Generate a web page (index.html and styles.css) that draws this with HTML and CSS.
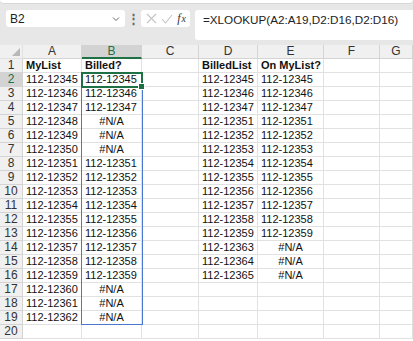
FILE: index.html
```html
<!DOCTYPE html>
<html>
<head>
<meta charset="utf-8">
<title>XLOOKUP</title>
<link rel="stylesheet" href="styles.css">
</head>
<body>
<div class="bar">
	<div class="ribbon-edge"></div>
	<div class="fx-row">
		<div class="namebox"><span>B2</span><svg width="8" height="6" viewBox="0 0 8 6"><path d="M1 1.5 L4 4.5 L7 1.5" fill="none" stroke="#666" stroke-width="1"/></svg></div>
		<div class="dots">⋮</div>
		<div class="fx-btns">
			<svg width="11" height="11" viewBox="0 0 11 11"><path d="M1 1 L10 10 M10 1 L1 10" stroke="#c4c4c4" stroke-width="1.1"/></svg>
			<svg width="12" height="10" viewBox="0 0 12 10"><path d="M1 5 L4.5 9 L11 1" fill="none" stroke="#c4c4c4" stroke-width="1.1"/></svg>
			<span class="fx"><i>f</i><i class="x">x</i></span>
		</div>
		<div class="formula">=XLOOKUP(A2:A19,D2:D16,D2:D16)</div>
	</div>
</div>
<div class="sheet">
	<div class="grid" id="grid"></div>
	<div class="spill"></div>
	<div class="active"><span class="handle"></span></div>
</div>
<script>
var cols = ['A','B','C','D','E','F','G']
var rows = [
	['MyList','Billed?','','BilledList','On MyList?'],
	['112-12345','112-12345','','112-12345','112-12345'],
	['112-12346','112-12346','','112-12346','112-12346'],
	['112-12347','112-12347','','112-12347','112-12347'],
	['112-12348','#N/A','','112-12351','112-12351'],
	['112-12349','#N/A','','112-12352','112-12352'],
	['112-12350','#N/A','','112-12353','112-12353'],
	['112-12351','112-12351','','112-12354','112-12354'],
	['112-12352','112-12352','','112-12355','112-12355'],
	['112-12353','112-12353','','112-12356','112-12356'],
	['112-12354','112-12354','','112-12357','112-12357'],
	['112-12355','112-12355','','112-12358','112-12358'],
	['112-12356','112-12356','','112-12359','112-12359'],
	['112-12357','112-12357','','112-12363','#N/A'],
	['112-12358','112-12358','','112-12364','#N/A'],
	['112-12359','112-12359','','112-12365','#N/A'],
	['112-12360','#N/A','','',''],
	['112-12361','#N/A','','',''],
	['112-12362','#N/A','','',''],
	['','','','','']
]

function cell(text, cls) {
	var d = document.createElement('div')
	d.className = cls
	d.textContent = text
	return d
}

function main() {
	var grid = document.getElementById('grid')
	grid.appendChild(cell('', 'corner'))
	cols.forEach(function(c) { grid.appendChild(cell(c, c=='B' ? 'colhead sel' : 'colhead')) })
	rows.forEach(function(r, i) {
		grid.appendChild(cell(i+1, i==1 ? 'rowhead sel' : 'rowhead'))
		for(var j=0; j<cols.length; j++) {
			var t = r[j] || ''
			var cls = 'c'
			if(i==0) cls += ' bold'
			if(t=='#N/A') cls += ' err'
			grid.appendChild(cell(t, cls))
		}
	})
}

main()
</script>
</body>
</html>
```

FILE: styles.css
```css
html, body { margin: 0; padding: 0; background: #fff; overflow: hidden; }
body { font: normal 11px 'Liberation Sans', Arial, sans-serif; color: #111; width: 413px; height: 341px; }

.bar { height: 45px; background: #e7e7e7; position: relative; }
.ribbon-edge { height: 3px; background: #fff; border-bottom: 1px solid #d6d6d6; border-radius: 0 0 4px 4px; }
.fx-row { display: flex; align-items: flex-start; padding: 6px 0 0 6px; gap: 0; }
.namebox { box-sizing: border-box; width: 119px; height: 17px; background: #fff; border-radius: 3px; display: flex; align-items: center; justify-content: space-between; padding: 0 5px 0 4px; font-size: 12px; color: #222; }
.dots { width: 16px; text-align: center; color: #666; font-size: 13px; line-height: 17px; font-weight: bold; }
.fx-btns { box-sizing: border-box; width: 49px; height: 17px; background: #fff; border-radius: 3px; display: flex; align-items: center; justify-content: space-between; padding: 0 4px 0 5px; }
.fx { font-family: 'Liberation Serif', serif; font-size: 12px; color: #333; }
.fx .x { font-size: 10px; margin-left: 1px; }
.formula { flex: 1; box-sizing: border-box; height: 30px; margin-left: 5px; background: #fff; border-radius: 3px 0 0 3px; padding: 3px 0 0 8px; font-size: 11.7px; color: #222; white-space: nowrap; }

.sheet { position: relative; }
.grid { display: grid; grid-template-columns: 23px 59px 60px 57px 59px 66px 56px 33px; grid-auto-rows: 14px; }
.grid > div { box-sizing: border-box; border-right: 1px solid #e1e1e1; border-bottom: 1px solid #e1e1e1; white-space: nowrap; overflow: hidden; line-height: 13px; }
.corner { background: #f0f0f0; position: relative; }
.corner::after { content: ''; position: absolute; right: 2px; bottom: 2px; border-style: solid; border-width: 0 0 8px 8px; border-color: transparent transparent #b8b8b8 transparent; }
.grid > .colhead { background: #f0f0f0; text-align: center; color: #333; font-size: 12px; border-right-color: #d4d4d4; border-bottom-color: #d4d4d4; }
.grid > .rowhead { background: #f0f0f0; text-align: center; color: #333; font-size: 12px; border-right-color: #d4d4d4; border-bottom-color: #d4d4d4; }
.grid > .colhead.sel { background: #d3d3d3; color: #1e7145; border-bottom: 2px solid #1e7145; line-height: 12px; }
.grid > .rowhead.sel { background: #d3d3d3; color: #1e7145; }
.c { padding-left: 3px; }
.c.bold { font-weight: bold; }
.c.err { text-align: center; padding-left: 0; }

.spill { position: absolute; left: 81px; top: 27px; width: 62px; height: 253px; box-sizing: border-box; border: 1px solid #4a78d0; pointer-events: none; }
.active { position: absolute; left: 81px; top: 27px; width: 62px; height: 16px; box-sizing: border-box; border: 2px solid #1e7145; }
.handle { position: absolute; right: -4px; bottom: -4px; width: 5px; height: 5px; background: #1e7145; border: 1px solid #fff; }
```
